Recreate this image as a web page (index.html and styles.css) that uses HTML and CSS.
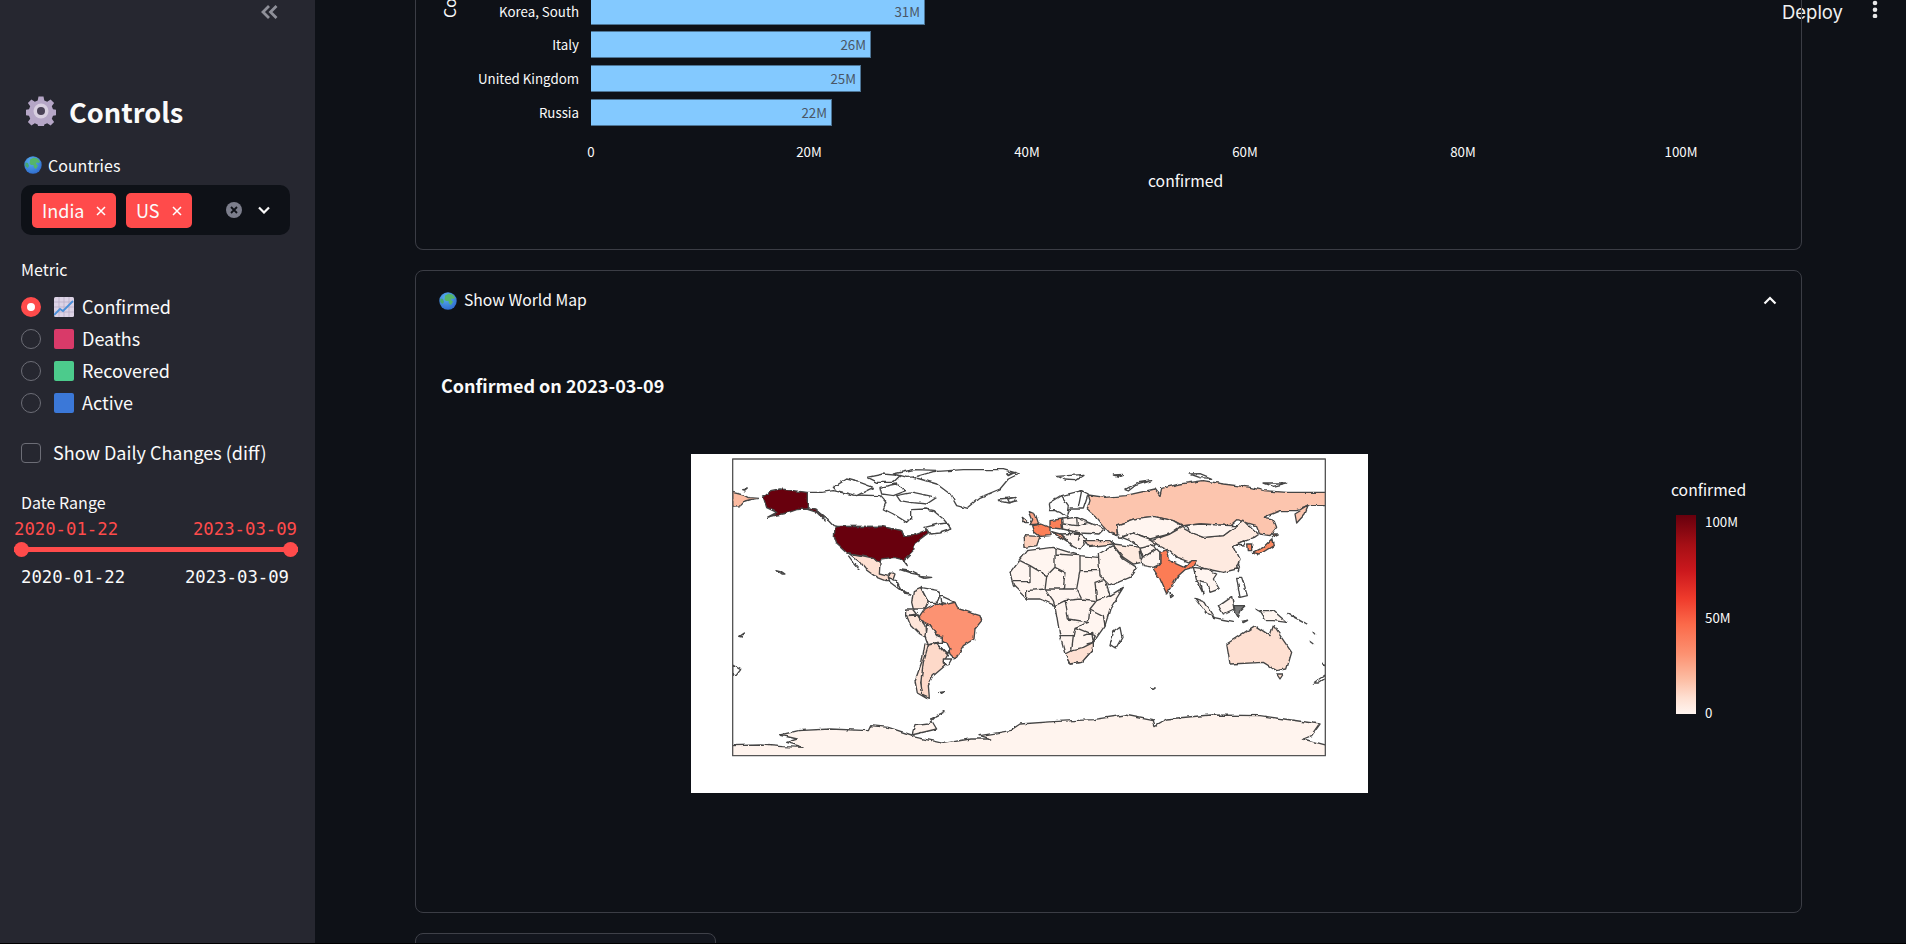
FILE: index.html
```html
<!DOCTYPE html>
<html lang="en">
<head>
<meta charset="utf-8">
<title>Controls</title>
<link rel="stylesheet" href="styles.css">
</head>
<body>
<svg class="defs" width="0" height="0" aria-hidden="true">
  <defs>
    <radialGradient id="sea" cx="40%" cy="30%" r="80%"><stop offset="0" stop-color="#58b0f0"/><stop offset="1" stop-color="#2c66cc"/></radialGradient>
    <filter id="rough" x="0" y="0" width="100%" height="100%" filterUnits="objectBoundingBox">
      <feTurbulence type="fractalNoise" baseFrequency="0.035" numOctaves="3" seed="7" result="n"/>
      <feDisplacementMap in="SourceGraphic" in2="n" scale="11" xChannelSelector="R" yChannelSelector="G"/>
    </filter>
    <symbol id="globe" viewBox="0 0 18 18">
      <circle cx="9" cy="9" r="8.7" fill="url(#sea)"/>
      <path d="M6 3.500 9.500 1.800 13.500 2.500 16 5.500 15 7 12.500 6.500 12 8 14 9.500 12 13 10 11.500 9.500 9 7 9 5.500 7.500Z" fill="#55b56a"/>
      <path d="M1.500 6.500 4 7 5 10 3.500 12 1.200 10Z" fill="#46a872"/>
    </symbol>
    <symbol id="xmark" viewBox="0 0 10 10"><path d="M1 1 9 9M9 1 1 9" stroke="currentColor" stroke-width="1.500" fill="none"/></symbol>
  </defs>
</svg>
<aside class="sidebar">
  <div class="collapse-row">
    <svg class="collapse" viewBox="0 0 17 14"><path d="M8 1 2 7l6 6M15.500 1 9.500 7l6 6" fill="none" stroke="#8f9099" stroke-width="2.800"/></svg>
  </div>
  <h2 class="title">
    <svg class="gear" viewBox="0 0 30 30">
      <path d="M12.500 0.500h5l.8 4 2.900 1.200 3.400-2.300 3.500 3.500-2.300 3.400 1.200 2.900 4 .8v5l-4 .8-1.200 2.900 2.300 3.400-3.500 3.500-3.400-2.300-2.900 1.200-.8 4h-5l-.8-4-2.900-1.200-3.400 2.300-3.500-3.500 2.300-3.400-1.200-2.900-4-.8v-5l4-.8 1.200-2.900-2.300-3.400 3.500-3.500 3.400 2.300 2.900-1.200z" fill="#b5a6c6"/>
      <circle cx="15" cy="15" r="7.500" fill="#d8cfe0"/>
      <circle cx="15" cy="15" r="4" fill="#4a4256"/>
    </svg>
    <span>Controls</span>
  </h2>
  <div class="label countries-label"><svg class="globe"><use href="#globe"/></svg>Countries</div>
  <div class="select">
    <span class="tag">India<svg class="x"><use href="#xmark"/></svg></span>
    <span class="tag tag-us">US<svg class="x"><use href="#xmark"/></svg></span>
    <span class="select-icons">
      <svg class="clear" viewBox="0 0 16 16"><circle cx="8" cy="8" r="8" fill="#7c7e8c"/><path d="M5 5l6 6M11 5l-6 6" stroke="#0e1117" stroke-width="1.800"/></svg>
      <svg class="chev" viewBox="0 0 12 8"><path d="M1 1.500 6 6.500l5-5" fill="none" stroke="#fafafa" stroke-width="2.200"/></svg>
    </span>
  </div>
  <div class="label metric-label">Metric</div>
  <div class="radios">
    <div class="radio-row"><span class="radio on"></span>
      <svg class="emoji" viewBox="0 0 20 20"><rect width="20" height="20" rx="1.500" fill="#dcd3e6"/><path d="M0 5h20M0 10h20M0 15h20M5 0v20M10 0v20M15 0v20" stroke="#b9aec8" stroke-width=".8"/><path d="M0 18 6 12l3 2 10-10" fill="none" stroke="#4a90d9" stroke-width="1.800"/></svg>
      <span class="opt">Confirmed</span></div>
    <div class="radio-row"><span class="radio"></span><span class="swatch pink"></span><span class="opt">Deaths</span></div>
    <div class="radio-row"><span class="radio"></span><span class="swatch green"></span><span class="opt">Recovered</span></div>
    <div class="radio-row"><span class="radio"></span><span class="swatch blue"></span><span class="opt">Active</span></div>
  </div>
  <div class="check-row"><span class="checkbox"></span><span class="opt">Show Daily Changes (diff)</span></div>
  <div class="label range-label">Date Range</div>
  <div class="range-values"><span>2020-01-22</span><span>2023-03-09</span></div>
  <div class="slider"><span class="thumb"></span><span class="thumb"></span></div>
  <div class="range-ticks"><span>2020-01-22</span><span>2023-03-09</span></div>
</aside>

<main class="main">
  <header class="toolbar">
    <span class="deploy">Deploy</span>
    <svg class="dots" viewBox="0 0 6 18"><circle cx="3" cy="3" r="2.300"/><circle cx="3" cy="9.700" r="2.300"/><circle cx="3" cy="16" r="2.300"/></svg>
  </header>

  <section class="card card-bars">
    <span class="y-title">Country</span>
    <div class="bars">
      <div class="bar-row"><span class="bar-label">Korea, South</span><span class="bar" style="width:334px">31M</span></div>
      <div class="bar-row"><span class="bar-label">Italy</span><span class="bar" style="width:280px">26M</span></div>
      <div class="bar-row"><span class="bar-label">United Kingdom</span><span class="bar" style="width:270px">25M</span></div>
      <div class="bar-row"><span class="bar-label">Russia</span><span class="bar" style="width:241px">22M</span></div>
    </div>
    <div class="ticks"><span>0</span><span>20M</span><span>40M</span><span>60M</span><span>80M</span><span>100M</span></div>
    <div class="x-title">confirmed</div>
  </section>

  <section class="card card-map">
    <div class="exp-head">
      <svg class="globe"><use href="#globe"/></svg><span class="exp-text">Show World Map</span>
      <svg class="chev-up" viewBox="0 0 14 9"><path d="M1.500 7.500 7 2l5.500 5.500" fill="none" stroke="#fafafa" stroke-width="2.200"/></svg>
    </div>
    <h3 class="map-title">Confirmed on 2023-03-09</h3>
    <div class="map-body">
      <svg class="map" viewBox="33 25 2031 1017" stroke="#454545" stroke-width="4" stroke-linejoin="round" fill="#fff">
        <g filter="url(#rough)">
        <rect x="33" y="25" width="2031" height="1017" fill="none" stroke="none"/>
        <!-- Americas -->
        <path fill="#fcbba1" d="M158 140 190 148 205 156 235 158 210 162 195 166 182 180 158 182Z"/>
        <path d="M185 132 202 130 195 136Z"/>
        <path d="M382 140 425 140 460 135 520 148 600 150 618 170 610 190 640 205 680 230 695 215 695 192 735 190 760 195 790 220 805 238 815 250 790 245 760 240 735 260 700 270 672 272 665 255 605 242 470 242 460 240 435 215 410 195 382 187Z"/>
        <path d="M460 125 500 100 540 110 580 125 530 150 470 135Z"/>
        <path d="M560 95 610 85 660 90 640 110 590 110Z"/>
        <path d="M600 125 650 115 680 135 640 150 605 145Z"/>
        <path d="M650 150 700 140 770 155 740 175 690 170 660 165Z"/>
        <path d="M640 85 700 72 770 74 730 92 680 95Z"/>
        <path d="M735 245 775 235 805 232 815 250 780 262 750 265Z"/>
        <path d="M700 95 760 78 850 72 970 72 1015 85 985 100 960 130 900 155 860 188 830 180 810 145 770 115 720 100Z"/>
        <path d="M958 160 1000 156 1012 165 985 172 965 168Z"/>
        <path fill="#67000d" d="M250 155 262 145 275 135 300 130 340 135 382 140 382 187 405 190 425 208 436 226 410 200 380 190 350 192 320 202 290 208 262 215 290 200 260 186 255 170Z"/>
        <path fill="#67000d" d="M465 243 605 242 665 255 672 272 700 270 742 253 745 265 705 295 700 320 675 345 682 360 668 342 640 335 605 340 600 352 580 335 545 328 500 322 470 295 463 275Z"/>
        <path fill="#fee0d2" d="M505 322 545 330 580 337 600 355 598 385 625 392 640 378 648 382 640 405 615 405 590 395 555 370 535 345Z"/>
        <path fill="none" d="M505 330 520 350 538 372"/>
        <path d="M625 395 648 405 662 432 690 445 672 442 650 425 630 410Z"/>
        <path d="M660 372 700 378 722 388 695 383ZM720 392 755 395 735 398Z"/>
        <path d="M288 375 300 378 315 388 306 388Z"/>
        <path d="M176 572 190 562 186 574Z"/>
        <path d="M158 658 182 672 168 690 158 688Z"/>
        <path fill="#fee5d9" d="M700 435 722 425 735 450 745 470 735 490 700 490 695 470Z"/>
        <path d="M722 425 775 435 782 450 770 470 745 470 735 450Z"/>
        <path d="M782 450 800 458 825 470 800 478 785 472Z"/>
        <path fill="#fff0ea" d="M680 490 700 490 712 505 680 510Z"/>
        <path fill="#fee5d9" d="M680 510 712 508 735 540 738 575 720 565 690 535Z"/>
        <path fill="#fc9272" d="M735 490 770 472 790 478 825 470 835 490 900 510 905 525 885 550 882 580 850 600 825 640 810 625 800 590 770 570 750 540 720 525 718 515Z"/>
        <path fill="#fff0ea" d="M740 538 750 540 770 570 790 575 790 598 770 590 745 598 735 570Z"/>
        <path d="M770 590 800 590 810 610 803 626 785 608Z"/>
        <path fill="#fdd9c9" d="M745 598 770 592 803 628 790 650 795 660 760 690 745 720 748 755 725 745 722 700 730 630Z"/>
        <path fill="#fee5d9" d="M735 592 745 598 730 650 722 710 728 748 740 758 712 742 705 705 725 650Z"/>
        <path d="M790 640 815 640 805 658 790 655Z"/>
        <path d="M776 740 792 738 785 743Z"/>
        <!-- Antarctica -->
        <path fill="#fff4ee" d="M150 900 240 898 310 903 372 905 320 890 352 880 300 868 355 855 450 850 565 855 572 840 625 845 695 868 770 850 752 820 795 798 770 810 745 835 705 840 695 872 790 893 870 880 935 880 900 870 960 860 990 855 1020 835 1120 828 1240 822 1335 808 1420 825 1425 840 1460 820 1590 808 1740 810 1920 835 1895 870 1870 880 1944 900 1944 940 150 940Z"/>

        <g transform="translate(990 0)">
          <!-- Arctic isles -->
          <path d="M-10 85 15 80 -5 90Z"/>
          <path d="M140 92 225 86 195 105 165 103Z"/>
          <path d="M310 88 340 86 325 92Z"/>
          <path d="M345 132 380 112 425 105 375 120 355 136Z"/>
          <path d="M540 85 570 84 605 98 570 96Z"/>
          <path d="M762 112 830 112 790 122Z"/>
          <path d="M-10 160 18 155 20 165 -5 170Z"/>
          <!-- Africa -->
          <path fill="#fff5f0" d="M0 380 30 340 50 315 130 305 210 330 265 335 285 400 300 450 340 425 300 490 285 540 250 590 250 610 215 650 180 655 165 625 150 570 135 480 90 460 50 460 10 420Z"/>
          <path fill="none" d="M135 305 135 365 110 390 60 360 30 345M60 360 60 408 5 408M135 325 210 330 210 375 265 375M135 365 165 380 160 430 200 430 210 375M110 390 105 430 160 430M50 460 50 435 105 430 130 465 135 480M200 430 215 460 260 465 300 450M260 465 255 410 285 400M215 460 165 465 135 480M165 465 175 520 235 530 240 490 260 465M240 490 280 510 285 540M150 570 190 570 195 545 235 530M190 570 185 612M195 545 255 570 250 590M220 570 245 560 250 590 230 595"/>
          <path fill="#fee0d2" d="M165 625 190 612 220 605 250 590 250 610 215 650 180 655Z"/>
          <path d="M330 545 336 575 316 610 300 600 310 560Z"/>
          <!-- Europe -->
          <path d="M115 175 155 150 215 135 235 145 220 190 180 190 170 215 150 200 135 195 118 195Z"/>
          <path fill="none" d="M155 150 175 180 170 215M215 135 205 185"/>
          <path fill="#fca486" d="M58 198 75 205 85 235 60 237 68 222Z"/>
          <path fill="#fdd9c9" d="M40 215 55 228 38 228Z"/>
          <path fill="#fc8059" d="M65 240 95 235 120 245 120 270 90 272 70 255Z"/>
          <path fill="#fc8059" d="M120 225 155 220 158 250 120 245Z"/>
          <path fill="#fdd0bb" d="M42 270 90 272 80 300 45 305Z"/>
          <path fill="#fb9473" d="M125 258 150 265 172 290 150 275Z"/>
          <path fill="#fff5f0" d="M155 220 200 215 235 230 285 250 270 265 210 262 158 250Z"/>
          <path fill="#fff5f0" d="M150 265 210 262 230 280 210 310 190 300Z"/>
          <path fill="none" d="M200 215 202 240 158 235M202 240 235 230M175 250 180 270M210 262 205 285"/>
          <path fill="#fdd5c3" d="M220 285 300 285 310 295 235 303Z"/>
          <!-- Russia and Asia -->
          <path fill="#fcc5ae" d="M235 148 285 155 345 150 435 130 450 150 455 128 510 115 580 105 640 115 720 125 760 135 830 140 960 140 960 180 900 180 860 195 810 195 760 215 790 220 800 245 780 270 750 265 740 240 680 222 660 240 570 235 520 240 490 225 430 212 380 218 320 238 322 270 300 262 280 240 260 215 232 190 240 165Z"/>
          <path fill="#fcc5ae" d="M855 205 895 180 885 205 860 232Z"/>
          <path fill="#fff5f0" d="M320 238 380 218 430 212 490 225 515 240 480 265 420 280 370 262 330 275 322 260Z"/>
          <path fill="#feeae0" d="M515 245 545 262 580 275 640 270 680 240 700 222 745 265 730 275 690 290 670 300 690 340 680 370 640 380 590 370 540 350 500 335 470 310 440 295 425 285 480 265Z"/>
          <path fill="#fff5f0" d="M525 240 570 235 660 240 680 240 640 270 580 275 545 262Z"/>
          <path fill="#fff5f0" d="M370 262 420 280 440 295 430 300 390 305 360 285 335 275Z"/>
          <path fill="#feeadf" d="M310 295 350 300 390 305 395 350 370 355 340 335 315 305Z"/>
          <path fill="#fff5f0" d="M390 305 430 295 440 310 400 335Z"/>
          <path fill="#fff5f0" d="M395 345 400 335 440 310 450 320 450 355 430 365 400 360Z"/>
          <path fill="#fff5f0" d="M265 325 310 300 340 340 380 365 360 395 300 420 270 390Z"/>
          <path fill="#fc7b55" d="M450 320 470 312 480 345 525 365 545 345 562 345 550 365 525 372 500 395 470 445 450 400 430 370 450 355Z"/>
          <path d="M480 440 490 450 482 456Z"/>
          <path fill="#fff5f0" d="M550 365 590 370 620 385 610 400 628 430 600 440 590 410 570 405 580 445 560 405Z"/>
          <path fill="#fc8660" d="M710 295 725 295 725 315 712 315Z"/>
          <path d="M680 295 710 282 700 298Z"/>
          <path fill="#fc8a62" d="M730 320 760 305 785 280 790 300 750 325Z"/>
          <path fill="#fc8a62" d="M785 268 805 268 790 275Z"/>
          <path d="M680 362 690 358 685 378Z"/>
          <path d="M680 395 695 395 712 450 690 455Z"/>
          <path fill="#fff5f0" d="M555 458 585 470 612 515 590 505Z"/>
          <path fill="#fff5f0" d="M610 515 670 527 640 522Z"/>
          <path fill="#fff5f0" d="M625 480 665 452 672 490 640 505Z"/>
          <path fill="#777" d="M672 480 705 480 695 490 685 515 676 500Z"/>
          <path d="M695 530 716 526 700 534Z"/>
          <path d="M735 490 750 498 742 495Z"/>
          <path fill="#fff5f0" d="M750 495 790 495 830 530 790 525 770 525Z"/>
          <path d="M830 500 845 510 888 535 850 515Z"/>
          <path d="M908 558 915 566M898 586 910 595" fill="none"/>
          <path fill="#fee0d2" d="M650 595 735 540 780 570 790 540 845 620 830 670 800 675 760 650 660 655Z"/>
          <path fill="#fee0d2" d="M800 685 820 685 810 700Z"/>
          <path d="M910 712 950 685 950 695 925 712Z"/>
          <path d="M938 655 950 660 950 664Z"/>
          <path d="M425 727 436 727 430 731Z"/>
        </g>
        </g>
        <path d="M33 25H158V1042H33ZM1936 25H2064V1042H1936ZM158 25H1936V40H158ZM158 930H1936V1042H158Z" fill="#fff" stroke="none"/>
        <rect x="158" y="40" width="1778" height="890" fill="none" stroke="#555"/>
      </svg>
      <div class="legend">
        <div class="legend-title">confirmed</div>
        <div class="legend-body">
          <div class="colorbar"></div>
          <div class="legend-ticks"><span>100M</span><span>50M</span><span>0</span></div>
        </div>
      </div>
    </div>
  </section>

  <section class="card card-next"></section>
</main>
</body>
</html>
```
FILE: styles.css
```css
* { box-sizing: border-box; }
html, body { margin: 0; height: 944px; overflow: hidden; }
body {
  display: flex;
  background: #0e1117;
  color: #fafafa;
  font-family: "Noto Sans CJK SC", "Noto Sans", sans-serif;
  border-bottom: 1px solid #000;
}
.defs { position: absolute; }

/* Sidebar */
.sidebar {
  flex: 0 0 315px;
  background: #262730;
  padding: 5px 25px 0 21px;
}
.collapse-row { display: flex; justify-content: flex-end; height: 14px; padding-right: 12px; }
.collapse { width: 17px; height: 14px; }
.title {
  display: flex; align-items: center; gap: 13px;
  margin: 72px 0 0 5px; height: 40px;
  font-size: 27.200px; line-height: 40px; font-weight: 600;
}
.gear { width: 30px; height: 30px; }
.label { font-size: 16px; line-height: 22px; height: 24px; }
.globe { width: 18px; height: 18px; flex: none; }
.countries-label { margin: 22px 0 0 3px; display: flex; align-items: center; gap: 6px; }
.select {
  display: flex; align-items: center; gap: 10px;
  height: 50px; margin-top: 8px; padding: 0 20px 0 11px;
  background: #0e1117; border-radius: 10px;
}
.tag {
  display: flex; align-items: center; justify-content: space-between;
  width: 84px; height: 35px; padding: 0 10px;
  background: #ff4b4b; border-radius: 5px;
  font-size: 18px; line-height: 31px;
}
.tag-us { width: 66px; }
.x { width: 10px; height: 10px; color: #fff; margin-top: 1px; }
.select-icons { margin-left: auto; display: flex; align-items: center; gap: 16px; }
.clear { width: 16px; height: 16px; }
.chev { width: 12px; height: 8px; }
.metric-label { margin-top: 23px; }
.radios { margin-top: 9px; }
.radio-row {
  display: flex; align-items: center; height: 32px;
  font-size: 18px; line-height: 24px;
}
.opt { margin-top: -2px; }
.radio {
  flex: none; width: 20px; height: 20px; margin-right: 13px;
  border: 1.500px solid #6c6d76; border-radius: 50%;
}
.radio.on { border: 6.500px solid #ff4b4b; background: #fff; }
.emoji { flex: none; width: 20px; height: 20px; margin-right: 8px; }
.swatch { flex: none; width: 20px; height: 20px; margin-right: 8px; border-radius: 2px; }
.pink { background: #d93a69; }
.green { background: #4ccb8c; }
.blue { background: #3b78d8; }
.check-row {
  display: flex; align-items: center; height: 24px; margin-top: 22px;
  font-size: 18px; line-height: 24px; white-space: nowrap;
}
.checkbox {
  flex: none; width: 20px; height: 20px; margin-right: 12px;
  border: 1.500px solid #6c6d76; border-radius: 4px;
}
.range-label { margin-top: 26px; }
.range-values, .range-ticks {
  display: flex; justify-content: space-between;
  font-family: "DejaVu Sans Mono", monospace; font-size: 17.300px; line-height: 20px;
}
.range-values { margin: 4px -7px 0; color: #ff4b4b; }
.slider {
  display: flex; justify-content: space-between;
  height: 15px; margin: 3px -7.500px 0;
  background: linear-gradient(#ff4b4b, #ff4b4b) center / 100% 5px no-repeat;
}
.thumb { width: 15px; height: 15px; border-radius: 50%; background: #ff4b4b; }
.range-ticks { margin: 10px 1px 0 0; }

/* Main */
.main {
  flex: 1; display: flex; flex-direction: column; gap: 20px;
  position: relative; padding: 0 104px 0 100px;
}
.toolbar {
  position: absolute; top: 0; right: 0;
  display: flex; align-items: center; gap: 29px;
  height: 24px; padding-right: 28px;
}
.deploy { font-family: "Inter", sans-serif; font-size: 18.500px; line-height: 24px; color: #f0f0f0; }
.dots { width: 6px; height: 18px; fill: #e8e8e8; margin-top: -6px; }

.card { flex: none; border: 1px solid #3b3d45; border-radius: 8px; position: relative; }
.card-bars {
  height: 250px; border-top: 0; border-radius: 0 0 8px 8px;
  display: flex; flex-direction: column; justify-content: flex-end;
  padding-bottom: 79px;
}
.y-title {
  position: absolute; left: 23px; top: 18px;
  transform: rotate(-90deg); transform-origin: 0 0;
  font-size: 16px; line-height: 20px;
}
.bars { display: flex; flex-direction: column; gap: 6.800px; }
.bar-row { display: flex; align-items: center; height: 27px; }
.bar-label { flex: 0 0 163px; margin-right: 12px; text-align: right; font-size: 13.300px; line-height: 27px; }
.bar {
  display: block; height: 27px; padding-right: 4px;
  background: #83c9ff; border: 1px solid #4d7596; border-left: 0;
  color: #4a5666; font-size: 13.300px; line-height: 25px; text-align: right;
}
.ticks { display: flex; margin: 16px 0 0 66px; }
.ticks span { flex: 0 0 218px; text-align: center; font-size: 13.300px; line-height: 20px; }
.x-title { margin-top: 8px; padding-left: 732px; font-size: 15.700px; line-height: 22px; height: 0; }

.card-map { height: 643px; }
.exp-head {
  display: flex; align-items: center; gap: 7px;
  height: 60px; padding: 0 24px 0 23px;
  font-size: 15.700px; line-height: 24px;
}
.exp-text { margin-top: -2px; }
.chev-up { width: 14px; height: 9px; margin-left: auto; margin-top: -2px; }
.map-title { margin: 39px 0 0 25px; font-size: 18px; line-height: 30px; font-weight: 700; }
.map-body { display: flex; margin-top: 54px; padding-left: 275px; }
.map { flex: none; width: 677px; height: 339px; background: #fff; display: block; }
.legend { margin: 25px 0 0 303px; }
.legend-title { font-size: 15.700px; line-height: 22px; }
.legend-body { display: flex; margin: 14px 0 0 5px; gap: 9px; }
.colorbar {
  width: 20px; height: 199px;
  background: linear-gradient(#67000d, #a50f15 15%, #cb181d 28%, #ef3b2c 42%, #fb6a4a 55%, #fc9272 70%, #fcbba1 82%, #fee0d2 92%, #fff5f0);
}
.legend-ticks {
  display: flex; flex-direction: column; justify-content: space-between;
  height: 211px; margin-top: -3px;
  font-size: 13.300px; line-height: 20px;
}
.card-next {
  width: 301px; height: 40px; background: #13161e;
  border-color: #3f4149; border-radius: 8px 8px 0 0;
}
```
